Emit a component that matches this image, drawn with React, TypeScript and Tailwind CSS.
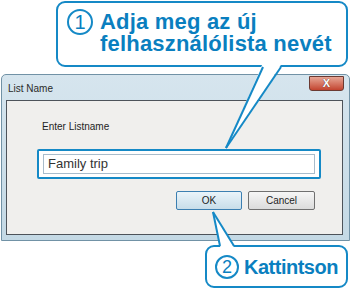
import React from 'react'

const BLUE = '#1589c6'

function Num({ n, size }: { n: string; size: string }) {
  return (
    <span className={`flex shrink-0 items-center justify-center rounded-full border-2 border-[#1589c6] leading-none font-normal text-[#0a7fbf] ${size}`}>
      {n}
    </span>
  )
}

export default function App() {
  return (
    <div className="relative h-[290px] w-[351px] overflow-hidden bg-white font-['Liberation_Sans',Arial,sans-serif]">
      {/* Callout 1 */}
      <div className="ml-[56px] mt-[1px] flex h-[66px] w-[292px] items-start gap-[7px] rounded-[9px] border-2 border-[#1589c6] bg-white pl-[9px] pt-[6px]">
        <Num n="1" size="h-[26px] w-[26px] text-[20px]" />
        <div className="text-[22px] leading-[22px] font-bold tracking-[0.2px] text-[#0a7fbf]">
          <div className="mt-[2px]">Adja meg az új</div>
          <div>felhasználólista nevét</div>
        </div>
      </div>

      {/* Dialog window */}
      <div className="ml-[1px] mt-[7px] flex h-[167px] w-[349px] flex-col rounded-t-[5px] border border-[#7192a6] bg-gradient-to-b from-[#d6e5ee] to-[#c4d9e5]">
        <div className="flex h-[25px] items-start justify-between">
          <span className="ml-[6px] mt-[6px] text-[10px] text-[#2a2a2a]">List Name</span>
          <div className="mr-[5px] mt-[1px] flex h-[15px] w-[35px] items-center justify-center rounded-b-[3px] border border-[#6b3a32] bg-gradient-to-b from-[#e6a595] to-[#c2432f]">
            <span className="text-[11px] font-bold leading-none text-white [text-shadow:0_0_1px_#3a1a14]">X</span>
          </div>
        </div>
        <div className="ml-[4px] mr-[6px] flex h-[135px] flex-col border border-[#4d535a] bg-[#f0efed]">
          <div className="ml-[35px] mt-[18px] text-[10px] text-[#1e1e1e]">Enter Listname</div>
          <div className="ml-[30px] mt-[15px] flex h-[30px] w-[284px] items-center justify-center rounded-[2px] border-2 border-[#1589c6] bg-white">
            <div className="flex h-[20px] w-[272px] items-center border border-[#a9bccb] bg-white pl-[4px] text-[13px] text-[#333]">
              Family trip
            </div>
          </div>
          <div className="mt-[12px] mr-[27px] flex justify-end gap-[6px]">
            <div className="flex h-[19px] w-[66px] items-center justify-center rounded-[2px] border border-[#3c7fb1] bg-gradient-to-b from-[#eaf4fa] to-[#c8dde9] text-[10px] text-[#1e1e1e]">
              OK
            </div>
            <div className="flex h-[19px] w-[67px] items-center justify-center rounded-[2px] border border-[#707070] bg-gradient-to-b from-[#f6f6f6] to-[#dcdcdc] text-[10px] text-[#1e1e1e]">
              Cancel
            </div>
          </div>
        </div>
      </div>

      {/* Callout 2 */}
      <div className="ml-[205px] mt-[4px] flex h-[43px] w-[143px] items-center gap-[5px] rounded-[9px] border-2 border-[#1589c6] bg-white pl-[8px]">
        <Num n="2" size="h-[24px] w-[24px] text-[18px]" />
        <span className="text-[20px] font-bold tracking-[-0.5px] text-[#0a7fbf]">Kattintson</span>
      </div>

      {/* Callout tails */}
      <svg className="pointer-events-none absolute inset-0" width="351" height="290" viewBox="0 0 351 290">
        <polygon points="262.5,64 226,148 281.5,64" fill="white" />
        <line x1="263" y1="67" x2="226" y2="148" stroke={BLUE} strokeWidth="2" />
        <line x1="281" y1="67" x2="226" y2="148" stroke={BLUE} strokeWidth="2" />
        <polygon points="220.5,248 213,212 234.5,248" fill="white" />
        <line x1="220" y1="246" x2="213" y2="212" stroke={BLUE} strokeWidth="2" />
        <line x1="234" y1="246" x2="213" y2="212" stroke={BLUE} strokeWidth="2" />
      </svg>
    </div>
  )
}
